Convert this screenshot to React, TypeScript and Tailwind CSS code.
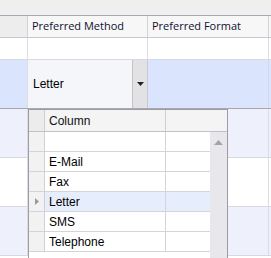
const rows = [
  { label: "", current: false },
  { label: "E-Mail", current: false },
  { label: "Fax", current: false },
  { label: "Letter", current: true },
  { label: "SMS", current: false },
  { label: "Telephone", current: false },
];

export default function App() {
  return (
    <div className="relative w-[271px] h-[258px] overflow-hidden bg-white text-[12px] font-['Liberation_Sans',Arial,sans-serif]">
      {/* group panel strip */}
      <div className="h-[16px] bg-[#efefef] border-b border-[#a8a8b4]" />

      {/* column headers */}
      <div className="flex h-[22px] border-b border-[#c8c8d0] bg-[#f7f7f7] text-[#101030]">
        <div className="w-[28px] shrink-0 border-r border-[#d2d2da] bg-[#ededed]" />
        <div className="w-[120px] shrink-0 border-r border-[#d2d2da] pl-[4px] flex items-center text-[11px] font-['Open_Sans',sans-serif]">
          Preferred Method
        </div>
        <div className="w-[121px] shrink-0 border-r border-[#d2d2da] pl-[4px] flex items-center text-[11px] font-['Open_Sans',sans-serif]">
          Preferred Format
        </div>
        <div className="flex-1" />
      </div>

      {/* first row */}
      <div className="flex h-[22px] border-b border-[#d8d8e0]">
        <div className="w-[28px] shrink-0 border-r border-[#dcdce4]" />
        <div className="w-[120px] shrink-0 border-r border-[#dcdce4]" />
        <div className="w-[121px] shrink-0 border-r border-[#dcdce4]" />
        <div className="flex-1" />
      </div>

      {/* focused row with editor */}
      <div className="flex h-[49px] border-b border-[#a8a8b0] bg-[#dae4fd]">
        <div className="w-[28px] shrink-0 border-r border-[#dcdce4]" />
        <div className="w-[120px] shrink-0 flex border-r border-[#c8c8d0] bg-[#f4f6fa]">
          <div className="flex-1 pl-[5px] flex items-center text-black">Letter</div>
          <div className="w-[15px] shrink-0 border-l border-[#c4c4c8] bg-[#e2e2e4] flex items-center justify-center">
            <svg width="7" height="4" viewBox="0 0 7 4">
              <path d="M0 0h7L3.5 4z" fill="#222" />
            </svg>
          </div>
        </div>
        <div className="w-[121px] shrink-0 border-r border-[#d4d8e8]" />
        <div className="flex-1" />
      </div>

      {[0, 1, 2].map((i) => (
        <div
          key={i}
          className={
            i % 2 === 0
              ? "flex h-[49px] border-b border-[#d8d8e0] bg-[#eef0fc]"
              : "flex h-[49px] border-b border-[#d8d8e0] bg-white"
          }
        >
          <div className="w-[28px] shrink-0 border-r border-[#dcdce4]" />
          <div className="w-[120px] shrink-0 border-r border-[#dcdce4]" />
          <div className="w-[121px] shrink-0 border-r border-[#dcdce4]" />
          <div className="flex-1" />
        </div>
      ))}

      {/* dropdown list */}
      <div className="absolute left-[28px] top-[109px] w-[200px] h-[160px] border border-[#9c9ca6] bg-white flex flex-col">
        <div className="flex h-[22px] shrink-0 border-b border-[#c0c0c8] bg-[#f4f4f4]">
          <div className="w-[16px] shrink-0 border-r border-[#d0d0d4] bg-[#ececec]" />
          <div className="w-[121px] shrink-0 border-r border-[#d0d0d4] pl-[4px] flex items-center text-[#111]">
            Column
          </div>
          <div className="flex-1" />
        </div>
        <div className="flex flex-1">
          <div className="flex-1 flex flex-col">
            {rows.map((r) => (
              <div
                key={r.label || "blank"}
                className={
                  r.current
                    ? "flex h-[20px] border-b border-[#d4d4d8] bg-[#e6edfc]"
                    : "flex h-[20px] border-b border-[#d4d4d8]"
                }
              >
                <div className="w-[16px] shrink-0 border-r border-[#d0d0d4] bg-[#f2f2f2] flex items-center justify-center">
                  {r.current && (
                    <svg width="4" height="7" viewBox="0 0 4 7">
                      <path d="M0 0v7l4-3.5z" fill="#9a9a9a" />
                    </svg>
                  )}
                </div>
                <div className="w-[121px] shrink-0 border-r border-[#d4d4d8] pl-[4px] flex items-center text-black">
                  {r.label}
                </div>
                <div className="flex-1" />
              </div>
            ))}
          </div>
          <div className="w-[17px] shrink-0 bg-[#e8e8ec] flex justify-center pt-[8px]">
            <svg width="9" height="5" viewBox="0 0 9 5">
              <path d="M4.5 0L9 5H0z" fill="#a4a4a8" />
            </svg>
          </div>
        </div>
      </div>
    </div>
  );
}
